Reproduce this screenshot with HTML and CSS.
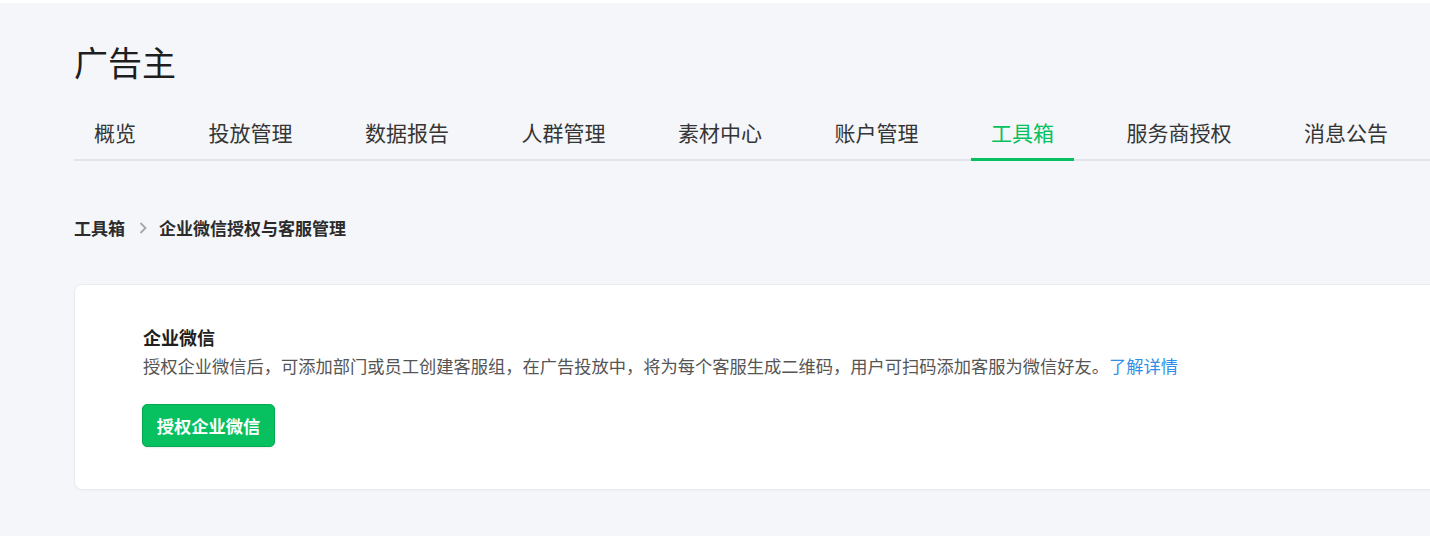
FILE: index.html
```html
<!DOCTYPE html>
<html lang="zh-CN">
<head>
<meta charset="utf-8">
<title>广告主</title>
<link rel="stylesheet" href="styles.css">
</head>
<body>
<div class="page">
  <h1 class="title">广告主</h1>
  <nav class="tabs">
    <a class="tab">概览</a>
    <a class="tab">投放管理</a>
    <a class="tab">数据报告</a>
    <a class="tab">人群管理</a>
    <a class="tab">素材中心</a>
    <a class="tab">账户管理</a>
    <a class="tab active">工具箱</a>
    <a class="tab">服务商授权</a>
    <a class="tab">消息公告</a>
  </nav>
  <div class="crumbs">
    <span class="crumb">工具箱</span>
    <svg class="chev" width="10" height="14" viewBox="0 0 10 14"><path d="M2.5 2 L7.5 7 L2.5 12" fill="none" stroke="#a3a6ab" stroke-width="1.8"/></svg>
    <span class="crumb">企业微信授权与客服管理</span>
  </div>
  <section class="card">
    <h2 class="card-title">企业微信</h2>
    <p class="card-desc">授权企业微信后，可添加部门或员工创建客服组，在广告投放中，将为每个客服生成二维码，用户可扫码添加客服为微信好友。<a class="link">了解详情</a></p>
    <button class="btn">授权企业微信</button>
  </section>
</div>
</body>
</html>
```
FILE: styles.css
```css
html, body {
  margin: 0;
  padding: 0;
}
body {
  background: #f4f6f9;
  border-top: 3px solid #ffffff;
  font-family: "Noto Sans CJK SC", "Noto Sans", sans-serif;
  overflow: hidden;
  height: 533px;
}
.page {
  padding-left: 74px;
}
.title {
  margin: 0;
  padding-top: 35px;
  font-size: 34px;
  line-height: 48px;
  font-weight: 400;
  color: #1e1e1e;
}
.tabs {
  display: flex;
  gap: 32.5px;
  margin-top: 30px;
  border-bottom: 2px solid #e1e4e8;
  width: 1400px;
}
.tab {
  display: block;
  padding: 0 20px 10px;
  font-size: 21px;
  line-height: 32px;
  color: #353535;
  margin-bottom: -2px;
  border-bottom: 3px solid transparent;
  white-space: nowrap;
}
.tab.active {
  color: #07c160;
  border-bottom-color: #07c160;
}
.crumbs {
  display: flex;
  align-items: center;
  gap: 10px;
  margin-top: 52px;
  height: 30px;
}
.crumb {
  font-size: 17px;
  font-weight: 600;
  color: #2b2b2b;
  line-height: 30px;
}
.chev {
  margin: 0 1px 0 3px;
}
.card {
  margin-top: 41px;
  width: 1400px;
  box-sizing: border-box;
  height: 206px;
  background: #fff;
  border-radius: 8px;
  border: 1px solid #e9ecef;
  box-shadow: 0 1px 2px rgba(0,0,0,0.03);
  padding: 38px 0 0 68px;
}
.card-title {
  margin: 0;
  font-size: 18px;
  font-weight: 600;
  line-height: 28px;
  color: #1f1f1f;
}
.card-desc {
  margin: 1px 0 0;
  font-size: 17.25px;
  line-height: 28px;
  color: #555;
}
.link {
  color: #2e8ee8;
}
.btn {
  display: block;
  margin-top: 24px;
  height: 43px;
  width: 133px;
  margin-left: -1px;
  background: #07c160;
  border: 1px solid #06a854;
  border-radius: 5px;
  color: #fff;
  font-family: inherit;
  font-size: 17.25px;
  font-weight: 600;
  box-shadow: 0 1px 2px rgba(0,0,0,0.08);
  padding: 0;
}
```
